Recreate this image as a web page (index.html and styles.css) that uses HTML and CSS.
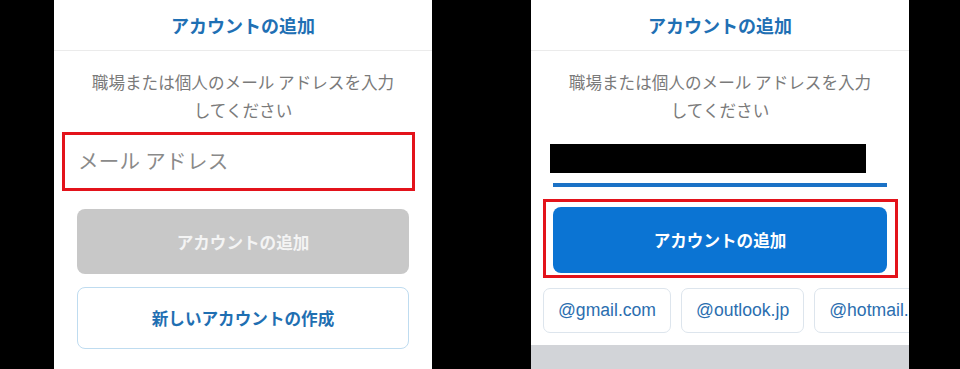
FILE: index.html
```html
<!DOCTYPE html>
<html lang="ja">
<head>
<meta charset="utf-8">
<link rel="stylesheet" href="styles.css">
</head>
<body>
<div class="stage">
  <section class="panel panel-left">
    <header class="head">アカウントの追加</header>
    <p class="desc">職場または個人のメール アドレスを入力<br>してください</p>
    <div class="mark mark-input">
      <span class="placeholder">メール アドレス</span>
    </div>
    <div class="btn btn-disabled">アカウントの追加</div>
    <div class="btn btn-outline">新しいアカウントの作成</div>
  </section>
  <section class="panel panel-right">
    <header class="head">アカウントの追加</header>
    <p class="desc">職場または個人のメール アドレスを入力<br>してください</p>
    <div class="redact"></div>
    <div class="underline"></div>
    <div class="mark mark-btn">
      <div class="btn btn-primary">アカウントの追加</div>
    </div>
    <div class="chips">
      <span class="chip">@gmail.com</span>
      <span class="chip">@outlook.jp</span>
      <span class="chip">@hotmail.com</span>
    </div>
    <div class="keyboard"></div>
  </section>
</div>
</body>
</html>
```
FILE: styles.css
```css
* { box-sizing: border-box; }
html, body {
  margin: 0;
  padding: 0;
  background: #000;
  width: 960px;
  height: 369px;
  overflow: hidden;
  font-family: "Noto Sans CJK JP", "Noto Sans", sans-serif;
}
.stage {
  display: flex;
  height: 369px;
  padding-left: 54px;
  gap: 99px;
}
.panel {
  width: 378px;
  height: 369px;
  background: #fff;
  display: flex;
  flex-direction: column;
  overflow: hidden;
}
.head {
  height: 51px;
  border-bottom: 1px solid #ebebeb;
  color: #1f70b4;
  font-size: 18px;
  font-weight: 700;
  text-align: center;
  line-height: 50px;
  flex: none;
}
.desc {
  margin: 17px 0 0;
  color: #7a7a7a;
  font-size: 16.6px;
  line-height: 28px;
  text-align: center;
  flex: none;
}
.mark {
  border: 3px solid #e3131b;
  flex: none;
}
.mark-input {
  margin: 8px 17px 0 8px;
  height: 59px;
  display: flex;
  align-items: center;
  padding-left: 13px;
  padding-bottom: 3px;
}
.placeholder {
  color: #8a8a8a;
  font-size: 20.5px;
  letter-spacing: 0.3px;
}
.btn {
  display: flex;
  align-items: center;
  justify-content: center;
  font-size: 16.6px;
  font-weight: 700;
  border-radius: 8px;
  flex: none;
}
.btn-disabled {
  margin: 18px 23px 0;
  height: 65px;
  background: #c8c8c8;
  color: #f4f4f4;
}
.btn-outline {
  margin: 13px 23px 0;
  height: 62px;
  border: 1px solid #bfdcf0;
  color: #1f6fb2;
  background: #fff;
}
.redact {
  margin: 20px 0 0 19px;
  width: 316px;
  height: 29px;
  background: #000;
  flex: none;
}
.underline {
  margin: 10px 0 0 22px;
  width: 334px;
  height: 4px;
  background: #1b72c6;
  flex: none;
}
.mark-btn {
  margin: 12px 0 0 12px;
  width: 355px;
  height: 79px;
  padding: 5px 8px 2px 7px;
  display: flex;
}
.btn-primary {
  flex: 1;
  height: 66px;
  background: #0b74d3;
  color: #fff;
}
.chips {
  margin: 10px 0 0 12px;
  display: flex;
  gap: 10px;
  flex: none;
  white-space: nowrap;
}
.chip {
  flex: none;
  height: 45px;
  padding: 0 14px;
  border: 1px solid #dde5ed;
  border-radius: 7px;
  display: flex;
  align-items: center;
  color: #2b6eaf;
  font-family: "Liberation Sans", Arial, sans-serif;
  font-size: 17.6px;
}
.keyboard {
  margin-top: 12px;
  flex: 1;
  background: #d2d4d8;
}
```
